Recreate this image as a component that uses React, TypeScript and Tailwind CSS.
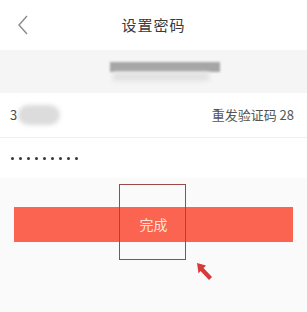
import React from 'react'

export default function App() {
  return (
    <div className="relative w-[307px] h-[312px] bg-[#fafafa] overflow-hidden" style={{ fontFamily: '"Noto Sans CJK SC", "Liberation Sans", sans-serif' }}>
      {/* header */}
      <div className="relative flex items-center justify-center h-[50px] bg-white">
        <svg className="absolute left-[17px] top-[15px]" width="12" height="20" viewBox="0 0 12 20">
          <path d="M10 1 L2 10 L10 19" fill="none" stroke="#8a8a8a" strokeWidth="1.4" />
        </svg>
        <span className="text-[15px] text-[#3a3a3a] tracking-[1px]">设置密码</span>
      </div>

      {/* phone number (blurred) */}
      <div className="flex flex-col items-center justify-center h-[43px] bg-[#f5f5f5]">
        <div className="w-[110px] h-[10px] ml-[23px] bg-[#a6a6a6] blur-[1px]" />
        <div className="w-[96px] h-[9px] ml-[14px] bg-[#e2e2e2] blur-[2px]" />
      </div>

      {/* code row */}
      <div className="flex items-center justify-between h-[45px] px-[10px] pr-[13px] bg-white border-b border-[#f0f0f0]">
        <div className="flex items-center">
          <span className="text-[13px] text-[#444]">3</span>
          <div className="w-[42px] h-[20px] ml-[1px] rounded-full bg-[#dcdcdc] blur-[2px]" />
        </div>
        <span className="text-[13px] text-[#555]">重发验证码 28</span>
      </div>

      {/* password row */}
      <div className="flex items-center h-[40px] pl-[11px] bg-white">
        <div className="flex gap-[5px]">
          {Array.from({ length: 9 }).map((_, i) => (
            <span key={i} className="w-[3px] h-[3px] rounded-full bg-[#333]" />
          ))}
        </div>
      </div>

      {/* submit */}
      <div className="pt-[29px] px-[14px]">
        <button className="w-full h-[35px] flex items-center justify-center bg-[#fa6450] text-[14px] text-[#fde3dc]">
          完成
        </button>
      </div>

      {/* annotation box */}
      <div className="absolute left-[119px] top-[184px] w-[67px] h-[76px] border border-[#9b4a48]" />

      {/* annotation arrow */}
      <svg className="absolute left-[195px] top-[261px]" width="20" height="21" viewBox="0 0 20 21">
        <path d="M2 2 L11 4.5 L8.5 7 L17 16 L14 19 L5.5 10 L3.5 12.5 Z" fill="#d63a3a" />
      </svg>
    </div>
  )
}
